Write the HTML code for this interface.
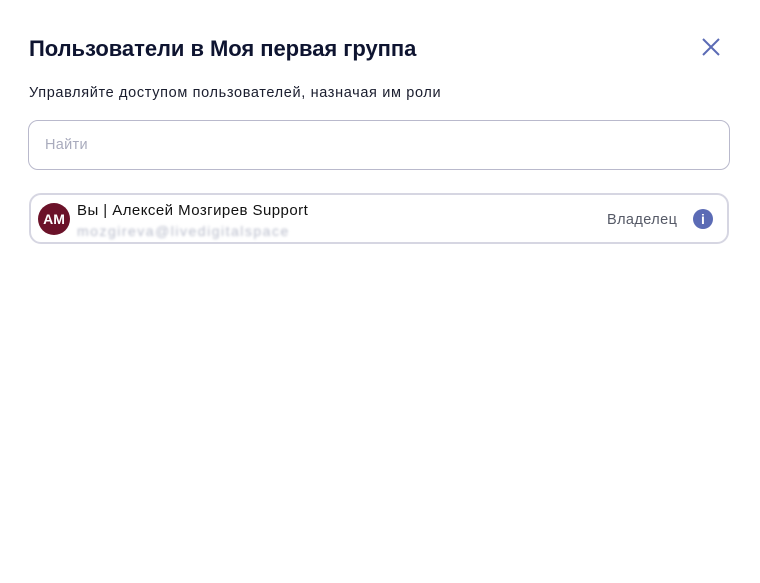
<!DOCTYPE html>
<html><head><meta charset="utf-8"><style>
body{margin:0;width:760px;height:583px;background:#fff;font-family:"Liberation Sans",sans-serif;position:relative;overflow:hidden;color:#0e1430}
.t{position:absolute;left:29px;top:36px;font-size:22px;font-weight:bold;letter-spacing:-0.05px}
.s{position:absolute;left:29px;top:85px;font-size:14.5px;color:#1a1d2e;letter-spacing:0.65px}
.in{position:absolute;left:28px;top:120px;width:702px;height:50px;border:1px solid #b9b9cc;border-radius:10px;box-sizing:border-box}
.in span{position:absolute;left:16px;top:16px;font-size:14.5px;color:#a9abbd;letter-spacing:0.3px}
.row{position:absolute;left:29px;top:193px;width:700px;height:51px;border:2px solid #d6d6e2;border-radius:12px;box-sizing:border-box}
.av{position:absolute;left:7px;top:8px;width:32px;height:32px;border-radius:50%;background:#6b1229;color:#fff;font-weight:bold;font-size:14px;text-align:center;line-height:32px}
.nm{position:absolute;left:46px;top:7px;font-size:15px;color:#111;letter-spacing:0.45px}
.em{position:absolute;left:46px;top:28px;font-size:14px;color:#b8bccb;filter:blur(1.2px);letter-spacing:1.5px}
.r{position:absolute;left:576px;top:17px;font-size:14.5px;color:#555966;letter-spacing:0.4px}
.i{position:absolute;left:662px;top:14px;width:20px;height:20px;border-radius:50%;background:#5b6bb5;color:#fff;font-weight:bold;font-size:14px;text-align:center;line-height:20px}
</style></head><body>
<div class="t">Пользователи в Моя первая группа</div>
<svg style="position:absolute;left:702px;top:38px" width="18" height="18" viewBox="0 0 18 18"><path d="M1 1L17 17M17 1L1 17" stroke="#5b6bb5" stroke-width="2"/></svg>
<div class="s">Управляйте доступом пользователей, назначая им роли</div>
<div class="in"><span>Найти</span></div>
<div class="row"><div class="av">AM</div><div class="nm">Вы | Алексей Мозгирев Support</div><div class="em">mozgireva@livedigitalspace</div><div class="r">Владелец</div><div class="i">i</div></div>
</body></html>
